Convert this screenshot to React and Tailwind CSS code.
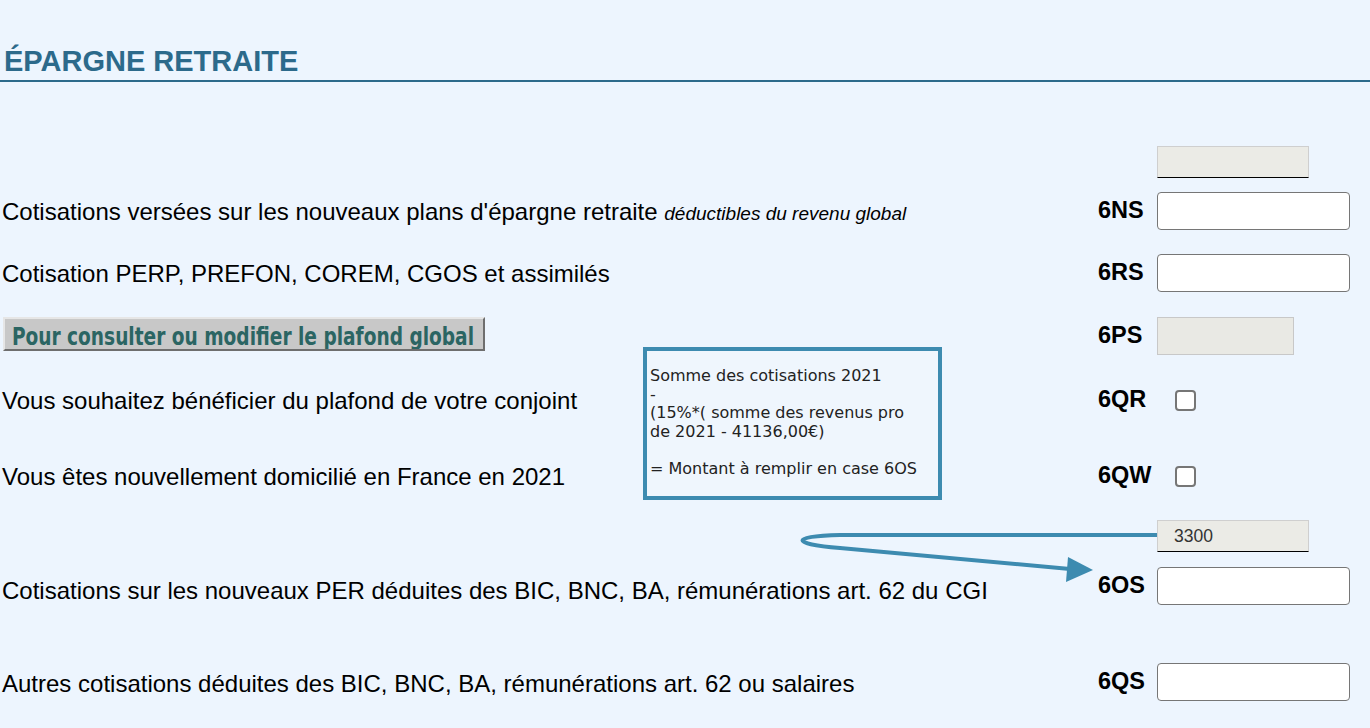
import React from 'react';

const Code = ({ children }) => (
  <span className="w-[59px] shrink-0 font-bold text-[23.5px] text-black">{children}</span>
);

const TextInput = () => (
  <input type="text" className="w-[193px] h-[38px] bg-white border border-[#767676] rounded-[4px] outline-none" />
);

const Check = () => (
  <span className="ml-[18px] w-[21px] h-[21px] bg-white border-2 border-[#767676] rounded-[4px]" />
);

const Row = ({ className = '', labelClass = 'pt-[2px]', label, code, children }) => (
  <div className={`flex items-center h-[38px] ${className}`}>
    <div className={`w-[1098px] shrink-0 pl-[2px] text-[24px] text-black whitespace-nowrap ${labelClass}`}>{label}</div>
    <Code>{code}</Code>
    {children}
  </div>
);

export default function App() {
  return (
    <div className="relative w-[1370px] h-[728px] overflow-hidden bg-[#edf5fe] font-['Liberation_Sans',Arial,sans-serif]">
      {/* Header */}
      <div className="h-[82px] flex items-end border-b-2 border-[#2c6a8b]">
        <h1 className="pl-[4px] pb-[4px] text-[29px] font-bold text-[#2c6a8b] leading-none">ÉPARGNE RETRAITE</h1>
      </div>

      {/* Readonly line */}
      <div className="mt-[61px] flex items-center h-[38px]">
        <div className="w-[1157px] shrink-0" />
        <div className="w-[152px] h-[32px] bg-[#ebebe6] border border-[#cfcfcf] border-b-black" />
      </div>

      <Row className="mt-[11px]" code="6NS" label={<>Cotisations versées sur les nouveaux plans d'épargne retraite <i className="text-[19px]">déductibles du revenu global</i></>}>
        <TextInput />
      </Row>

      <Row className="mt-[24px]" code="6RS" label="Cotisation PERP, PREFON, COREM, CGOS et assimilés">
        <TextInput />
      </Row>

      <Row
        className="mt-[25px]"
        labelClass=""
        code="6PS"
        label={
          <div className="-ml-[2px] pl-[3px]">
            <button className="w-[482px] h-[34px] bg-[#c8c8c8] border-2 border-t-[#e6e6e6] border-l-[#e6e6e6] border-b-[#6e6e6e] border-r-[#6e6e6e] text-left overflow-hidden">
              <span className="inline-block origin-left scale-x-[0.86] pl-[8px] whitespace-nowrap font-['DejaVu_Sans_Condensed',sans-serif] font-bold text-[24px] leading-none text-[#2b6563]">
                Pour consulter ou modifier le plafond global
              </span>
            </button>
          </div>
        }
      >
        <div className="w-[137px] h-[38px] bg-[#e9e9e4] border border-[#c8c8c8]" />
      </Row>

      <Row className="mt-[26px]" code="6QR" label="Vous souhaitez bénéficier du plafond de votre conjoint">
        <Check />
      </Row>

      <Row className="mt-[38px]" code="6QW" label="Vous êtes nouvellement domicilié en France en 2021">
        <Check />
      </Row>

      <div className="mt-[22px] flex items-center h-[38px]">
        <div className="w-[1157px] shrink-0" />
        <div className="w-[152px] h-[32px] bg-[#ebebe6] border border-[#cfcfcf] border-b-black flex items-center pl-[16px] text-[17.5px] text-[#333]">
          3300
        </div>
      </div>

      <Row className="mt-[12px]" labelClass="pt-[9px]" code="6OS" label="Cotisations sur les nouveaux PER déduites des BIC, BNC, BA, rémunérations art. 62 du CGI">
        <TextInput />
      </Row>

      <Row className="mt-[58px]" labelClass="pt-[4px]" code="6QS" label="Autres cotisations déduites des BIC, BNC, BA, rémunérations art. 62 ou salaires">
        <TextInput />
      </Row>

      {/* Annotation box */}
      <div className="absolute left-[643px] top-[347px] w-[299px] h-[153px] border-4 border-[#3d8bb0] bg-[#eff6fd] pl-[3px] pt-[16px] font-['DejaVu_Sans',Verdana,sans-serif] text-[16px] leading-[18.6px] text-[#222]">
        <div>Somme des cotisations 2021</div>
        <div>-</div>
        <div>(15%*( somme des revenus pro</div>
        <div>de 2021 - 41136,00€)</div>
        <div>&nbsp;</div>
        <div>= Montant à remplir en case 6OS</div>
      </div>

      {/* Arrow */}
      <svg className="absolute left-0 top-0 pointer-events-none" width="1370" height="728">
        <path
          d="M1157 535 L840 535 C790 536 790 544 840 548 L1070 569"
          fill="none"
          stroke="#3d8bb0"
          strokeWidth="4"
        />
        <polygon points="1068,557 1093,570 1066,582" fill="#3d8bb0" />
      </svg>
    </div>
  );
}
